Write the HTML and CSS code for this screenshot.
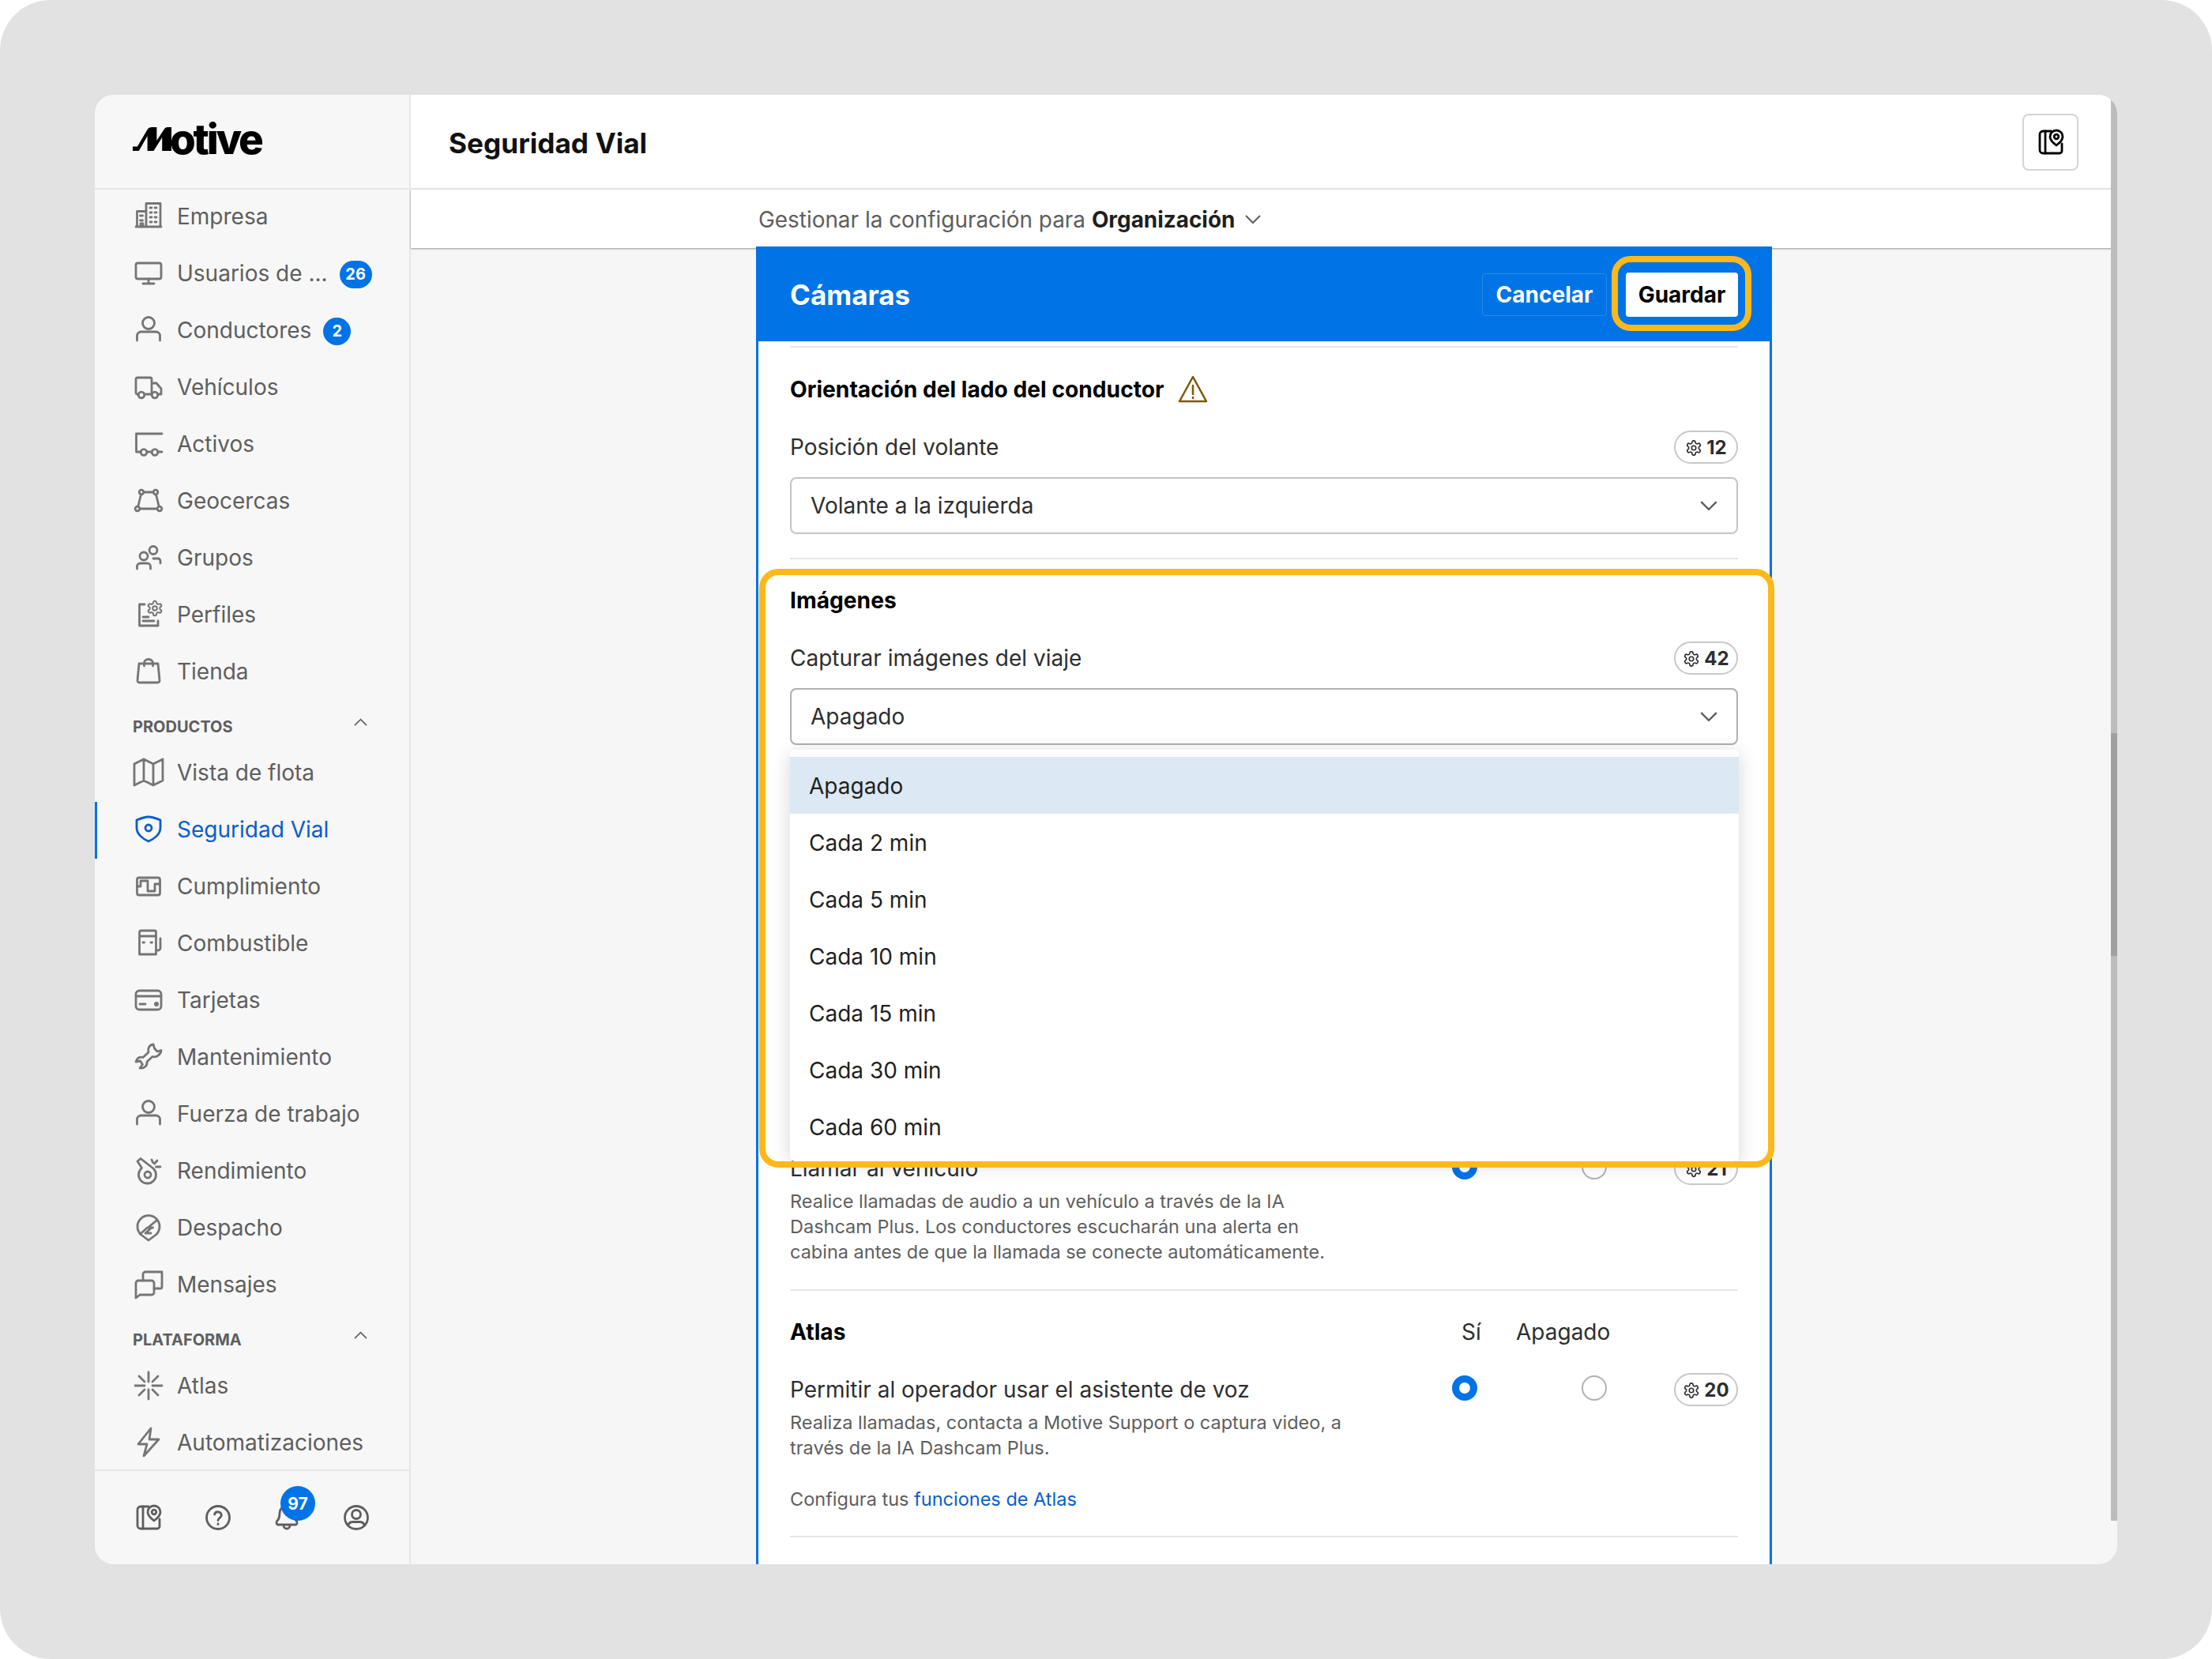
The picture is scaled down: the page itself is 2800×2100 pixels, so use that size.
FILE: index.html
```html
<!DOCTYPE html>
<html lang="es">
<head>
  <meta charset="UTF-8"/>
  <title>Seguridad Vial</title>
  <link rel="stylesheet" href="styles.css">
</head>
<body>
  <svg class="defs" width="0" height="0">
    <symbol id="gear" viewBox="0 0 24 24">
      <path d="M12.22 2h-.44a2 2 0 0 0-2 2v.18a2 2 0 0 1-1 1.73l-.43.25a2 2 0 0 1-2 0l-.15-.08a2 2 0 0 0-2.73.73l-.22.38a2 2 0 0 0 .73 2.73l.15.1a2 2 0 0 1 1 1.72v.51a2 2 0 0 1-1 1.74l-.15.09a2 2 0 0 0-.73 2.73l.22.38a2 2 0 0 0 2.73.73l.15-.08a2 2 0 0 1 2 0l.43.25a2 2 0 0 1 1 1.73V20a2 2 0 0 0 2 2h.44a2 2 0 0 0 2-2v-.18a2 2 0 0 1 1-1.73l.43-.25a2 2 0 0 1 2 0l.15.08a2 2 0 0 0 2.73-.73l.22-.39a2 2 0 0 0-.73-2.73l-.15-.08a2 2 0 0 1-1-1.74v-.5a2 2 0 0 1 1-1.74l.15-.09a2 2 0 0 0 .73-2.73l-.22-.38a2 2 0 0 0-2.73-.73l-.15.08a2 2 0 0 1-2 0l-.43-.25a2 2 0 0 1-1-1.73V4a2 2 0 0 0-2-2z"/>
      <circle cx="12" cy="12" r="3"/>
    </symbol>
    <symbol id="person" viewBox="0 0 40 40">
      <circle cx="20" cy="10" r="7.5"/>
      <path d="M5.5 32v-6a5 5 0 0 1 5-5h19a5 5 0 0 1 5 5v6"/>
    </symbol>
    <symbol id="book" viewBox="0 0 40 40">
      <path d="M20 6H10a4 4 0 0 0-4 4v20a4 4 0 0 0 4 4h21a3 3 0 0 0 3-3v-9"/>
      <path d="M13 6v28"/>
      <path d="M27 24s8-6 8-11a8 8 0 1 0-16 0c0 5 8 11 8 11z"/>
      <circle cx="27" cy="13" r="2.8"/>
    </symbol>
    <symbol id="chevron" viewBox="0 0 20 12">
      <path d="M1 1l9 9 9-9"/>
    </symbol>
  </svg>

  <div class="frame">
    <div class="app">

      <aside class="sidebar">
        <div class="logo">
          <svg class="logo-mark" viewBox="0 0 50 30" preserveAspectRatio="none"><path d="M0 30v-5.500h6L19 3c1-2 3-3 6-3h6v17L41 2c1-1.500 3-2 5-2h4v30H38V13L27 30h-8V11L8 30z"/></svg>
          <span class="logo-text">otive</span>
        </div>

        <nav class="nav">
          <a class="nav-item">
            <svg class="icon" viewBox="0 0 40 40"><path d="M5.500 32V12.500H17M17 32V2.500h18V32M4 32h32M22 8h2M28 8h2M22 14h2M28 14h2M22 20h2M28 20h2M22 26h2M28 26h2M9.500 18h3M9.500 24h3M10 32v-4h3v4"/></svg>
            <span>Empresa</span>
          </a>
          <a class="nav-item">
            <svg class="icon" viewBox="0 0 40 40"><rect x="4" y="6" width="32" height="20" rx="2.500"/><path d="M20 26v6M13 32h14"/></svg>
            <span>Usuarios de ...</span>
            <b class="count wide">26</b>
          </a>
          <a class="nav-item">
            <svg class="icon"><use href="#person"/></svg>
            <span>Conductores</span>
            <b class="count">2</b>
          </a>
          <a class="nav-item">
            <svg class="icon" viewBox="0 0 40 40"><path d="M7 28H6a2 2 0 0 1-2-2V9a2 2 0 0 1 2-2h16a2 2 0 0 1 2 2v19M15 28h9M24 14h6l6 7v7h-4"/><circle cx="11" cy="29" r="3.800"/><circle cx="28" cy="29" r="3.800"/></svg>
            <span>Vehículos</span>
          </a>
          <a class="nav-item">
            <svg class="icon" viewBox="0 0 40 40"><path d="M37 6H4.500v23H10M18 29h6M32 29h5"/><circle cx="14" cy="29.500" r="3.800"/><circle cx="28" cy="29.500" r="3.800"/></svg>
            <span>Activos</span>
          </a>
          <a class="nav-item">
            <svg class="icon" viewBox="0 0 40 40"><path d="M14 8h12M10.500 11L6.800 26M29.500 11l3.700 15M9 29h22"/><circle cx="11" cy="8" r="2.800"/><circle cx="29" cy="8" r="2.800"/><circle cx="6" cy="29" r="2.800"/><circle cx="34" cy="29" r="2.800"/></svg>
            <span>Geocercas</span>
          </a>
          <a class="nav-item">
            <svg class="icon" viewBox="0 0 40 40"><circle cx="14" cy="17" r="5"/><circle cx="26" cy="9.500" r="5"/><path d="M5.500 33v-3a4 4 0 0 1 4-4h9a4 4 0 0 1 4 4v3M26 20h6a3 3 0 0 1 3 3v3"/></svg>
            <span>Grupos</span>
          </a>
          <a class="nav-item">
            <svg class="icon" viewBox="0 0 40 40"><path d="M15 6H8.500v27H32v-6M13 22h7M13 27h14"/><use class="thin" href="#gear" x="17" y="0" width="22" height="22"/></svg>
            <span>Perfiles</span>
          </a>
          <a class="nav-item">
            <svg class="icon" viewBox="0 0 40 40"><path d="M8 9h24l2 21a2.500 2.500 0 0 1-2.500 3h-23A2.500 2.500 0 0 1 6 30zM14.500 12V8a5.500 4.500 0 0 1 11 0v4"/></svg>
            <span>Tienda</span>
          </a>

          <div class="nav-group">
            <span>PRODUCTOS</span>
            <svg class="group-chevron"><use href="#chevron"/></svg>
          </div>

          <a class="nav-item">
            <svg class="icon" viewBox="0 0 40 40"><path d="M2 8l12-6 12 6 12-6v27l-12 6-12-6-12 6zM14 2v27M26 8v27"/></svg>
            <span>Vista de flota</span>
          </a>
          <a class="nav-item active">
            <svg class="icon" viewBox="0 0 40 40"><path d="M5 7c5-2 10-4 15-4s10 2 15 4v10c0 8-8 14-15 17-7-3-15-9-15-17z"/><circle cx="20" cy="17" r="4"/></svg>
            <span>Seguridad Vial</span>
          </a>
          <a class="nav-item">
            <svg class="icon" viewBox="0 0 40 40"><rect x="5.500" y="8" width="29" height="22" rx="2.500"/><path d="M5.500 19H10v-7h9v13h9v-9h6.500"/></svg>
            <span>Cumplimiento</span>
          </a>
          <a class="nav-item">
            <svg class="icon" viewBox="0 0 40 40"><path d="M8.500 33V5a2 2 0 0 1 2-2h17a2 2 0 0 1 2 2v28zM8.500 10h21M30 28h2a3 3 0 0 0 3-3V13M13 18h1.500M23 18h1.500"/></svg>
            <span>Combustible</span>
          </a>
          <a class="nav-item">
            <svg class="icon" viewBox="0 0 40 40"><rect x="4" y="7" width="32" height="24" rx="4.500"/><path d="M4 14h32M9 24h7"/><circle class="solid" cx="30" cy="24" r="3"/></svg>
            <span>Tarjetas</span>
          </a>
          <a class="nav-item">
            <svg class="icon" viewBox="0 0 40 40"><path d="M26 3c-5 .5-7.500 5.500-6 10l-7 6.500c-4-1.500-8 1-9 5.500l5.500-1 3 4.500L9 33c5 1 10-3 9-8l7-6.500c5 1.500 10.500-2.500 11-8l-5 1.500L27.500 8z"/></svg>
            <span>Mantenimiento</span>
          </a>
          <a class="nav-item">
            <svg class="icon"><use href="#person"/></svg>
            <span>Fuerza de trabajo</span>
          </a>
          <a class="nav-item">
            <svg class="icon" viewBox="0 0 40 40"><path d="M11.500 15.500L6 7l4-3.500L26 16a11 11 0 1 1-14.500-.5z"/><circle cx="19" cy="24" r="4"/><path d="M24 5l1.500 3.500M31 6l-3.500 4M35 14h-5.500"/></svg>
            <span>Rendimiento</span>
          </a>
          <a class="nav-item">
            <svg class="icon" viewBox="0 0 40 40"><path d="M20 35l-10-7.500a14 14 0 1 1 20 0z"/><path d="M9.500 27l9-8h7M30 10l-9 7.500M24 19l-8 7h7"/></svg>
            <span>Despacho</span>
          </a>
          <a class="nav-item">
            <svg class="icon" viewBox="0 0 40 40"><path d="M4 36V17a3 3 0 0 1 3-3h17a3 3 0 0 1 3 3v12a3 3 0 0 1-3 3H9z"/><path d="M13 14V6a3 3 0 0 1 3-3h21v19a2 2 0 0 1-2 2h-8"/></svg>
            <span>Mensajes</span>
          </a>

          <div class="nav-group">
            <span>PLATAFORMA</span>
            <svg class="group-chevron"><use href="#chevron"/></svg>
          </div>

          <a class="nav-item">
            <svg class="icon" viewBox="0 0 40 40"><path d="M20 2v12M20 24v12M3 19h12M25 19h12M8 7l7 7M25 24l7 7M32 7l-7 7M15 24l-7 7"/></svg>
            <span>Atlas</span>
          </a>
          <a class="nav-item">
            <svg class="icon" viewBox="0 0 40 40"><path d="M23 1L7 21h11l-4 15 19-21H21z"/></svg>
            <span>Automatizaciones</span>
          </a>
        </nav>

        <div class="sidebar-foot">
          <svg class="icon dark"><use href="#book"/></svg>
          <svg class="icon dark" viewBox="0 0 40 40"><circle cx="20" cy="20" r="14.500"/><path d="M15.500 16a4.500 4.500 0 0 1 8.800 1c0 3-4.300 3.600-4.300 6.500M20 28v.5"/></svg>
          <div class="bell">
            <svg class="icon dark" viewBox="0 0 40 40"><path d="M8 24c3-3 3-6 3-10a9 9 0 0 1 18 0c0 4 0 7 3 10 2 2 1 5-1 5H9c-2 0-3-3-1-5zM16 30a4 4 0 0 0 8 0"/></svg>
            <b class="bell-count">97</b>
          </div>
          <svg class="icon dark" viewBox="0 0 40 40"><circle cx="20" cy="20" r="14.500"/><circle cx="20" cy="16" r="5.500"/><path d="M9.500 30c1-3 3-4.500 6-4.500h9c3 0 5 1.500 6 4.500"/></svg>
        </div>
      </aside>

      <main class="main">
        <header class="topbar">
          <h1>Seguridad Vial</h1>
          <button class="help-btn"><svg class="help-icon"><use href="#book"/></svg></button>
        </header>

        <div class="orgbar">
          <span>Gestionar la configuración para <strong>Organización</strong></span>
          <svg class="org-chevron"><use href="#chevron"/></svg>
        </div>

        <div class="content">
          <section class="panel">
            <div class="panel-head">
              <h2>Cámaras</h2>
              <div class="panel-actions">
                <button class="btn-cancel">Cancelar</button>
                <button class="btn-save">Guardar</button>
              </div>
            </div>

            <div class="panel-body">
              <div class="block first">
                <h3 class="block-title">Orientación del lado del conductor
                  <svg class="warn" viewBox="0 0 40 40"><path d="M20 4L37 35H3z"/><path d="M20 15v11M20 30v1"/></svg>
                </h3>
                <div class="field-row">
                  <label>Posición del volante</label>
                  <span class="chip"><svg class="chip-gear"><use href="#gear"/></svg>12</span>
                </div>
                <div class="select">
                  <span>Volante a la izquierda</span>
                  <svg class="select-chevron"><use href="#chevron"/></svg>
                </div>
              </div>

              <div class="block images">
                <h3 class="block-title">Imágenes</h3>
                <div class="field-row">
                  <label>Capturar imágenes del viaje</label>
                  <span class="chip"><svg class="chip-gear"><use href="#gear"/></svg>42</span>
                </div>
                <div class="select open">
                  <span>Apagado</span>
                  <svg class="select-chevron"><use href="#chevron"/></svg>
                  <ul class="menu">
                    <li class="selected">Apagado</li>
                    <li>Cada 2 min</li>
                    <li>Cada 5 min</li>
                    <li>Cada 10 min</li>
                    <li>Cada 15 min</li>
                    <li>Cada 30 min</li>
                    <li>Cada 60 min</li>
                  </ul>
                </div>
              </div>

              <div class="block call">
                <div class="option">
                  <div class="option-text">
                    <p class="option-name">Llamar al vehículo</p>
                    <p class="option-desc">Realice llamadas de audio a un vehículo a través de la IA Dashcam Plus. Los conductores escucharán una alerta en cabina antes de que la llamada se conecte automáticamente.</p>
                  </div>
                  <i class="radio on"></i>
                  <i class="radio"></i>
                  <span class="chip"><svg class="chip-gear"><use href="#gear"/></svg>21</span>
                </div>
              </div>

              <div class="block atlas">
                <div class="atlas-head">
                  <h3 class="block-title">Atlas</h3>
                  <span>Sí</span>
                  <span>Apagado</span>
                </div>
                <div class="option">
                  <div class="option-text">
                    <p class="option-name">Permitir al operador usar el asistente de voz</p>
                    <p class="option-desc">Realiza llamadas, contacta a Motive Support o captura video, a través de la IA Dashcam Plus.</p>
                  </div>
                  <i class="radio on"></i>
                  <i class="radio"></i>
                  <span class="chip"><svg class="chip-gear"><use href="#gear"/></svg>20</span>
                </div>
                <p class="option-link">Configura tus <a>funciones de Atlas</a></p>
              </div>
            </div>
          </section>
        </div>

        <div class="scrollbar"><div class="scrollbar-thumb"></div></div>
      </main>

      <!-- highlight rings drawn on top of the shot -->
      <div class="ring ring-save"></div>
      <div class="ring ring-images"></div>
    </div>
  </div>
</body>
</html>
```

FILE: styles.css
```css
:root {
  --blue: #0073e6;
  --link-blue: #0a5dcb;
  --orange: #ffb81c;
  --line: #e6e6e6;
  --side-bg: #f7f7f7;
  --side-text: #5e5e5e;
  --icon: #757575;
  --ink: #2e2e2e;
}
* { margin:0; padding:0; box-sizing:border-box; }
html, body {
  width:2800px; height:2100px; overflow:hidden;
  background:#fff;
  font-family:'Inter','Liberation Sans',sans-serif;
  color:var(--ink);
}
.defs { position:absolute; }
svg { fill:none; stroke:currentColor; overflow:visible; }

.frame {
  width:2800px; height:2100px;
  padding:120px;
  background:#e2e2e2;
  border-radius:64px;
}
.app {
  position:relative;
  display:flex;
  width:2560px; height:1860px;
  border-radius:24px;
  overflow:hidden;
  background:#f6f6f6;
}

/* ─── SIDEBAR ───────────────────────── */
.sidebar {
  width:400px; flex:none;
  display:flex; flex-direction:column;
  background:var(--side-bg);
  border-right:2px solid var(--line);
}
.logo {
  height:120px; flex:none;
  display:flex; align-items:flex-end;
  padding:0 0 47px 48px;
  border-bottom:2px solid var(--line);
  color:#000;
}
.logo-mark {
  width:49px; height:30px;
  fill:#000; stroke:none;
}
.logo-text {
  font-size:53px; font-weight:800;
  letter-spacing:-3.200px; line-height:30px;
  margin-left:-2px;
}
.nav { flex:1; overflow:hidden; margin-top:-1px; }
.nav-item {
  position:relative;
  display:flex; align-items:center; gap:16px;
  height:72px;
  padding-left:48px;
  font-size:28px;
  color:var(--side-text);
}
.nav-item > span { padding-bottom:2px; }
.nav-item.active { color:var(--link-blue); }
.nav-item.active::before {
  content:""; position:absolute;
  left:0; top:0; bottom:0; width:3px;
  background:var(--blue);
}
.icon {
  width:40px; height:40px; flex:none;
  color:var(--icon);
  stroke-width:2.800; stroke-linejoin:round; stroke-linecap:round;
}
.icon .solid { fill:currentColor; stroke:none; }
.icon .thin { stroke-width:2.200; }
.icon.dark { color:#5e5e5e; }
.nav-item.active .icon { color:var(--link-blue); }
.count {
  display:flex; align-items:center; justify-content:center;
  width:35px; height:35px;
  margin-left:-1px;
  border-radius:18px;
  background:var(--blue); color:#fff;
  font-size:20px; font-weight:700;
}
.count.wide { width:41px; }
.nav-group {
  display:flex; justify-content:space-between;
  height:56px;
  padding:23px 53px 0 48px;
  font-size:20px; font-weight:700; line-height:20px;
  color:var(--side-text);
}
.group-chevron {
  width:17px; height:10px;
  margin-top:-1px;
  transform:scaleY(-1);
  stroke-width:1.900;
}
.sidebar-foot {
  height:120px; flex:none;
  display:flex; align-items:center; gap:47.500px;
  padding:0 0 0 48px;
  border-top:2px solid var(--line);
}
.bell { position:relative; width:40px; height:40px; }
.bell-count {
  position:absolute; left:12px; top:-20px;
  display:flex; align-items:center; justify-content:center;
  width:44px; height:44px;
  border-radius:50%;
  background:var(--blue); color:#fff;
  font-size:21px; font-weight:700;
}

/* ─── TOP BARS ──────────────────────── */
.main {
  position:relative;
  flex:1; min-width:0;
  display:flex; flex-direction:column;
}
.topbar {
  height:120px; flex:none;
  display:flex; align-items:center; justify-content:space-between;
  padding:0 49px 0 48px;
  background:#fff;
  border-bottom:2px solid var(--line);
}
.topbar h1 { margin-top:4px; font-size:35.200px; font-weight:700; color:#111; }
.help-btn {
  display:flex; align-items:center; justify-content:center;
  width:71px; height:72px;
  margin-top:2px;
  background:#fff;
  border:2px solid #d4d4d4; border-radius:8px;
  color:#000;
}
.help-icon { width:40px; height:40px; stroke-width:2.800; stroke-linejoin:round; stroke-linecap:round; }
.orgbar {
  height:74px; flex:none;
  display:flex; align-items:center; gap:13px;
  padding:2px 0 0 440px;
  background:#fff;
  box-shadow:0 1px 2px rgba(0,0,0,.4);
  position:relative;
  font-size:27.900px;
  color:var(--side-text);
}
.orgbar strong { font-weight:700; color:#1f1f1f; }
.org-chevron { width:20px; height:12px; stroke-width:2; }

/* ─── PANEL ─────────────────────────── */
.content {
  flex:1; min-height:0;
  padding-left:437px;
}
.panel {
  position:relative;
  width:1286px; height:1668px;
  margin-top:-2px;
  background:#fff;
  border:solid var(--blue);
  border-width:0 3px;
}
.panel-head {
  height:120px;
  display:flex; align-items:center; justify-content:space-between;
  padding:2px 40px 0 43px;
  margin:0 -3px;
  background:var(--blue);
}
.panel-head h2 { font-size:35px; font-weight:700; color:#fff; }
.panel-actions { display:flex; align-items:center; gap:24px; margin-right:3px; }
.btn-cancel, .btn-save {
  height:56px;
  font:700 28px 'Inter','Liberation Sans',sans-serif;
  border-radius:4px;
}
.btn-cancel {
  width:158px; height:54px;
  background:transparent; color:#fff;
  border:1.500px solid #2a8ae8;
}
.btn-save {
  width:142px;
  background:#fff; color:#000;
  border:none;
}
.panel-body { padding:0 40px; }
.block { border-top:2px solid var(--line); }
.block.first { margin-top:6px; padding:35px 0 30px; }
.block.images { padding:34px 0 0; }
.block.call { border-top:none; padding:0 0 31px; margin-top:518px; }
.block.atlas { padding:34px 0 0; border-bottom:2px solid var(--line); height:314px; }
.block-title {
  display:flex; align-items:center; gap:16px;
  height:36px;
  font-size:28.200px; font-weight:700;
  color:#000;
}
.warn {
  width:40px; height:40px;
  color:#7a5a00;
  stroke-width:2.500; stroke-linejoin:round; stroke-linecap:round;
}
.field-row {
  display:flex; align-items:center; justify-content:space-between;
  height:42px;
  margin-top:34px;
  font-size:28px;
}
.chip {
  display:inline-flex; align-items:center; justify-content:center; gap:5px;
  width:81px; height:42px;
  margin-top:-3px;
  border:2px solid #c8c8c8; border-radius:21px;
  background:#fff;
  font-size:24px; font-weight:700;
  color:var(--ink);
}
.field-row .chip { margin-top:0; }
.chip-gear { width:22px; height:22px; stroke-width:1.800; margin-top:2px; }
.select {
  position:relative;
  display:flex; align-items:center; justify-content:space-between;
  height:72px;
  margin-top:17px;
  padding:0 24px;
  border:2px solid #c4c4c4; border-radius:8px;
  font-size:28px;
}
.select.open { border-color:#b0b0b0; }
.select-chevron { width:22px; height:13px; color:#5e5e5e; stroke-width:2.200; }
.menu {
  position:absolute; z-index:5;
  left:-2px; right:-3px; top:76px;
  padding:9px 0 8px;
  list-style:none;
  background:#fff;
  border-radius:6px;
  box-shadow:0 4px 24px rgba(0,0,0,.16);
  color:#1f1f1f;
}
.menu li {
  display:flex; align-items:center;
  height:72px;
  padding:2px 0 0 24px;
}
.menu li.selected { background:#dce8f3; }

/* ─── OPTION ROWS ───────────────────── */
.option {
  display:grid;
  grid-template-columns:838px 164px 117px 81px;
  align-items:start;
}
.option-name { font-size:28px; line-height:36px; }
.option-desc {
  width:705px;
  margin-top:8px;
  font-size:23.500px; line-height:32px;
  color:#5e5e5e;
}
.radio {
  display:block;
  width:32px; height:32px;
  border-radius:50%;
  border:2px solid #b0b0b0;
}
.radio.on { border:9px solid var(--blue); }
.atlas-head {
  display:grid;
  grid-template-columns:850px 69px auto;
  align-items:center;
  height:36px;
  margin-bottom:37px;
  font-size:28px;
}
.option-link {
  margin-top:33px;
  font-size:23.500px; line-height:32px;
  color:#5e5e5e;
}
.option-link a { color:var(--link-blue); }

/* ─── SCROLLBAR / RINGS ─────────────── */
.scrollbar {
  position:absolute; right:0; top:0;
  width:8px; height:1805px;
  background:#bcbcbc;
}
.scrollbar-thumb {
  position:absolute; top:808px; left:0;
  width:8px; height:282px;
  background:#a0a0a0;
}
.ring {
  position:absolute; z-index:10;
  border:8px solid var(--orange);
  pointer-events:none;
}
.ring-save { left:1920px; top:204px; width:177px; height:95px; border-radius:24px; }
.ring-images { left:841px; top:600px; width:1285px; height:758px; border-radius:24px; }
```
